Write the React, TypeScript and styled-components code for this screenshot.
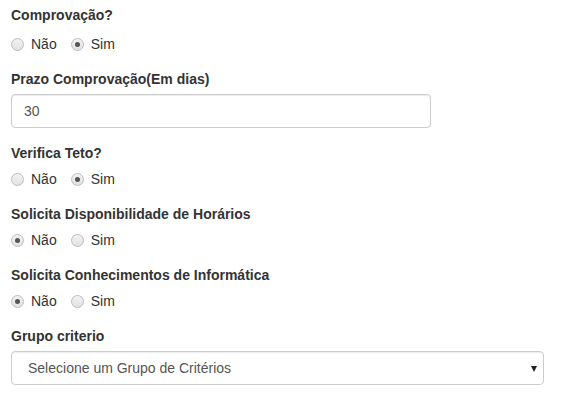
import React from 'react';
import styled, { createGlobalStyle } from 'styled-components';

const GlobalStyle = createGlobalStyle`
  * { box-sizing: border-box; }
  body {
    margin: 0;
    background: #fff;
    font-family: "Liberation Sans", Arial, Helvetica, sans-serif;
    font-size: 14px;
    line-height: 20px;
    color: #333;
  }
`;

const Form = styled.form`
  padding: 5px 11px 0 11px;
  width: 564px;
`;

const Group = styled.div`
  margin-bottom: 15px;
`;

const Label = styled.label<{ $space?: number }>`
  display: block;
  font-weight: bold;
  margin-bottom: ${(p) => p.$space ?? 5}px;
`;

const RadioRow = styled.div`
  display: flex;
  gap: 14px;
  height: 21px;
  padding-top: 1px;
  align-items: center;
`;

const RadioLabel = styled.label`
  display: flex;
  align-items: center;
  gap: 7px;
  cursor: pointer;
`;

const Radio = styled.input.attrs({ type: 'radio' })`
  appearance: none;
  margin: 0;
  width: 13px;
  height: 13px;
  border-radius: 50%;
  border: 1px solid #bdbdbd;
  background: linear-gradient(#f2f2f2, #e2e2e2);
  display: grid;
  place-items: center;
  &:checked::after {
    content: '';
    width: 5px;
    height: 5px;
    border-radius: 50%;
    background: #555;
  }
`;

const Field = styled.input<{ $width: number }>`
  display: block;
  width: ${(p) => p.$width}px;
  height: 34px;
  padding: 6px 12px;
  font: inherit;
  color: #555;
  border: 1px solid #ccc;
  border-radius: 4px;
  box-shadow: inset 0 1px 1px rgba(0, 0, 0, 0.075);
`;

const SelectBox = styled.div`
  position: relative;
  width: 533px;
  height: 34px;
  border: 1px solid #ccc;
  border-radius: 4px;
  box-shadow: inset 0 1px 1px rgba(0, 0, 0, 0.075);
  padding: 6px 16px;
  color: #555;
`;

const Arrow = styled.span`
  position: absolute;
  right: 6px;
  top: 14px;
  width: 0;
  height: 0;
  border-left: 3.5px solid transparent;
  border-right: 3.5px solid transparent;
  border-top: 6px solid #222;
`;

interface RadioGroupProps {
  name: string;
  label: string;
  value: 'nao' | 'sim';
  space?: number;
}

function RadioGroup({ name, label, value, space }: RadioGroupProps) {
  return (
    <Group>
      <Label $space={space}>{label}</Label>
      <RadioRow>
        <RadioLabel>
          <Radio name={name} defaultChecked={value === 'nao'} />
          Não
        </RadioLabel>
        <RadioLabel>
          <Radio name={name} defaultChecked={value === 'sim'} />
          Sim
        </RadioLabel>
      </RadioRow>
    </Group>
  );
}

export default function App() {
  return (
    <>
      <GlobalStyle />
      <Form>
        <RadioGroup name="comprovacao" label="Comprovação?" value="sim" space={8} />
        <Group>
          <Label>Prazo Comprovação(Em dias)</Label>
          <Field $width={420} defaultValue="30" />
        </Group>
        <RadioGroup name="teto" label="Verifica Teto?" value="sim" />
        <RadioGroup name="horarios" label="Solicita Disponibilidade de Horários" value="nao" />
        <RadioGroup name="informatica" label="Solicita Conhecimentos de Informática" value="nao" />
        <Group>
          <Label>Grupo criterio</Label>
          <SelectBox>
            Selecione um Grupo de Critérios
            <Arrow />
          </SelectBox>
        </Group>
      </Form>
    </>
  );
}
